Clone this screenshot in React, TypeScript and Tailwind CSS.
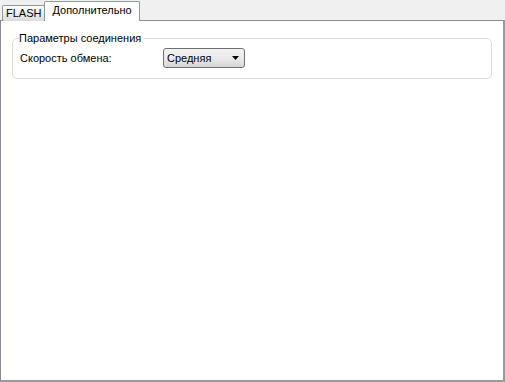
import React from 'react';

const App: React.FC = () => {
  return (
    <div className="w-[505px] h-[382px] bg-[#f0f0f0] flex flex-col font-['Liberation_Sans',sans-serif] text-[11px] text-black">
      {/* tabs */}
      <div className="h-[20px] flex items-end pl-[2px] relative z-10">
        <div className="h-[16px] px-[3px] flex items-center border border-[#919b9c] border-b-0 rounded-t-[2px] bg-gradient-to-b from-[#fcfcfc] to-[#dcdcdc] mb-[-1px]">
          FLASH
        </div>
        <div className="h-[20px] px-[7px] flex items-center border border-[#919b9c] border-b-0 rounded-t-[2px] bg-white mb-[-1px] -ml-[1px] pb-[2px]">
          Дополнительно
        </div>
      </div>
      {/* panel */}
      <div className="flex-1 bg-white border border-[#898c95] border-r-2 border-b-2 border-r-[#999] border-b-[#999] px-[11px] pt-[11px]">
        <fieldset className="border border-[#dcdcdc] rounded-[5px] px-[7px] pb-[10px] pt-0">
          <legend className="px-0 pr-[2px] -ml-[1px] leading-[13px]">Параметры соединения</legend>
          <div className="flex items-center mt-[3px]">
            <span className="w-[143px]">Скорость обмена:</span>
            <div className="w-[82px] h-[20px] border border-[#707070] rounded-[3px] bg-gradient-to-b from-[#f2f2f2] via-[#ebebeb] to-[#d6d6d6] flex items-center justify-between pl-[3px] pr-[5px]">
              <span>Средняя</span>
              <svg width="7" height="4" viewBox="0 0 7 4">
                <path d="M0 0H7L3.5 4Z" fill="#000" />
              </svg>
            </div>
          </div>
        </fieldset>
      </div>
    </div>
  );
};

export default App;
